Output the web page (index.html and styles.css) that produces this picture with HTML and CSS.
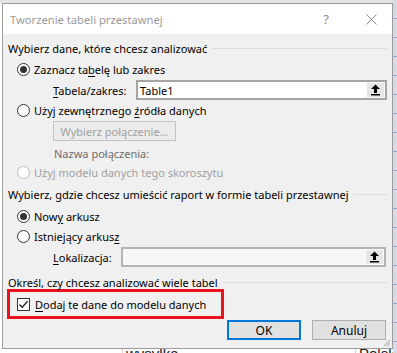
FILE: index.html
```html
<!DOCTYPE html>
<html lang="pl">
<head>
    <meta charset="UTF-8">
    <title>Tworzenie tabeli przestawnej</title>
    <link rel="stylesheet" href="styles.css">
</head>
<body>
    <div class="screen">
        <!-- Dialog window -->
        <div class="dialog">
            <div class="titlebar">
                <span class="title">Tworzenie tabeli przestawnej</span>
                <span class="help">?</span>
                <span class="close">
                    <svg width="11" height="11" viewBox="0 0 11 11"><path d="M0.5 0.5L10.5 10.5M10.5 0.5L0.5 10.5" stroke="#8a8a8a" stroke-width="1" fill="none"/></svg>
                </span>
            </div>

            <div class="content">
                <!-- Source data -->
                <div class="group-head"><span>Wybierz dane, które chcesz analizować</span></div>
                <div class="option"><span class="radio checked"></span><span>Zaznacz ta<u>b</u>elę lub zakres</span></div>
                <div class="field">
                    <span class="field-label label-table"><u>T</u>abela/zakres:</span>
                    <div class="ref-box">
                        <span class="ref-value">Table1</span>
                        <span class="ref-btn">
                            <svg width="11" height="12" viewBox="0 0 11 12"><path d="M5.5 0.5L10 5H7V9H4V5H1Z" fill="#000"/><rect x="1" y="10" width="9" height="1.5" fill="#000"/></svg>
                        </span>
                    </div>
                </div>
                <div class="option"><span class="radio"></span><span>Użyj zewnętrznego <u>ź</u>ródła danych</span></div>
                <div class="conn-row"><span class="conn-btn">Wybierz połączenie...</span></div>
                <div class="conn-name">Nazwa połączenia:</div>
                <div class="option option-small disabled"><span class="radio"></span><span>Użyj modelu danych tego skoroszytu</span></div>

                <!-- Destination -->
                <div class="group-head head-2"><span>Wybierz, gdzie chcesz umieścić raport w formie tabeli przestawnej</span></div>
                <div class="option option-new"><span class="radio checked"></span><span>Now<u>y</u> arkusz</span></div>
                <div class="option"><span class="radio"></span><span>Istniejący arkus<u>z</u></span></div>
                <div class="field">
                    <span class="field-label label-loc"><u>L</u>okalizacja:</span>
                    <div class="ref-box ref-disabled">
                        <span class="ref-value"></span>
                        <span class="ref-btn">
                            <svg width="11" height="12" viewBox="0 0 11 12"><path d="M5.5 0.5L10 5H7V9H4V5H1Z" fill="#000"/><rect x="1" y="10" width="9" height="1.5" fill="#000"/></svg>
                        </span>
                    </div>
                </div>

                <!-- Data model -->
                <div class="group-head head-3"><span>Określ, czy chcesz analizować wiele tabel</span></div>
                <div class="highlight">
                    <span class="checkbox">
                        <svg width="11" height="11" viewBox="0 0 11 11"><path d="M1.5 5.5L4.2 8.3L9.6 2.2" stroke="#222" stroke-width="1.3" fill="none"/></svg>
                    </span>
                    <span><u>D</u>odaj te dane do modelu danych</span>
                </div>

                <div class="actions">
                    <span class="btn btn-default">OK</span>
                    <span class="btn">Anuluj</span>
                </div>
            </div>

            <span class="grip">
                <svg width="8" height="8" viewBox="0 0 8 8"><path d="M7 1L1 7M7 4L4 7M7 7L7 7" stroke="#b8b8b8" stroke-width="1.2" fill="none"/></svg>
            </span>
        </div>

        <!-- Worksheet peeking under the dialog -->
        <div class="sheet-row">
            <span class="cell cell-a">wysyłka</span>
            <span class="cell cell-b">Polska</span>
        </div>
    </div>
</body>
</html>
```

FILE: styles.css
```css
* {
    box-sizing: border-box;
    margin: 0;
    padding: 0;
}

body {
    font-family: "Noto Sans", sans-serif;
    font-size: 11px;
    color: #000;
    background: #fff;
}

u {
    text-decoration-thickness: 1px;
    text-underline-offset: 2px;
}

/* Whole screenshot area with the sheet behind the dialog */
.screen {
    width: 397px;
    height: 353px;
    overflow: hidden;
    padding: 3px 4px 0 2px;
    background:
        repeating-linear-gradient(to bottom, #d3dae6 0 18px, #8fa6cc 18px 19px) right top / 4px 100% no-repeat,
        linear-gradient(#e4e4e4, #e4e4e4) left top / 100% 3px no-repeat,
        #fff;
}

/* Dialog window */
.dialog {
    position: relative;
    width: 391px;
    height: 346px;
    border: 1px solid #9c9c9c;
    background: #f0f0f0;
}

.titlebar {
    display: flex;
    align-items: center;
    height: 30px;
    padding-left: 7px;
    background: #fff;
}

.title {
    color: #999;
    font-size: 11.2px;
}

.help {
    margin-left: auto;
    color: #8a8a8a;
    font-size: 13px;
}

.close {
    display: flex;
    margin: 0 15px 0 37px;
}

.content {
    padding: 0 5px;
}

/* Section headings with the thin rule after them */
.group-head {
    display: flex;
    align-items: center;
    gap: 5px;
    height: 16px;
    margin-top: 6px;
    white-space: nowrap;
}

.group-head::after {
    content: "";
    flex: 1;
    height: 1px;
    background: #dcdcdc;
}

.head-2 {
    margin-top: 5px;
}

.head-3 {
    height: 14px;
    margin-top: 8px;
}

/* Radio rows */
.option {
    display: flex;
    align-items: center;
    gap: 4px;
    height: 20px;
    padding-left: 9px;
    white-space: nowrap;
}

.group-head + .option {
    margin-top: 3px;
}

.option-new {
    margin-top: 4px !important;
}

.option-small {
    height: 18px;
}

.radio {
    position: relative;
    flex: none;
    width: 13px;
    height: 13px;
    border: 1px solid #333;
    border-radius: 50%;
    background: #fff;
}

.radio.checked::after {
    content: "";
    position: absolute;
    left: 2px;
    top: 2px;
    width: 7px;
    height: 7px;
    border-radius: 50%;
    background: #333;
}

.disabled {
    color: #a0a0a0;
}

.disabled .radio {
    border-color: #bcbcbc;
}

/* Label + reference box */
.field {
    display: flex;
    align-items: center;
    height: 20px;
    padding-left: 45px;
}

.option + .field {
    margin-top: 1px;
}

.label-table {
    width: 83px;
}

.label-loc {
    width: 68px;
}

.ref-box {
    flex: 1;
    display: flex;
    align-items: center;
    height: 20px;
    border: 2px solid #a5a5a5;
    background: #fff;
}

.label-loc + .ref-box {
    margin-right: 1px;
}

.ref-disabled {
    background: #f7f7f7;
    border-color: #b4b4b4;
}

.ref-value {
    flex: 1;
    padding-left: 2px;
}

.ref-btn {
    display: flex;
    align-items: center;
    justify-content: center;
    width: 19px;
    height: 16px;
    background: #e6e6e6;
    border: 1px solid #fafafa;
}

/* External connection (disabled) */
.conn-row {
    margin-top: 1px;
    padding-left: 45px;
}

.conn-btn {
    display: flex;
    align-items: center;
    justify-content: center;
    width: 123px;
    height: 20px;
    border: 1px solid #c4c4c4;
    background: #ececec;
    color: #a0a0a0;
}

.conn-name {
    height: 18px;
    line-height: 18px;
    margin-top: 4px;
    padding-left: 46px;
    color: #6d6d6d;
}

/* Red annotation around the data model checkbox */
.highlight {
    display: flex;
    align-items: center;
    gap: 5px;
    width: 217px;
    height: 30px;
    margin-left: -1px;
    padding-left: 7px;
    border: 3px solid #e8141c;
    white-space: nowrap;
}

.checkbox {
    display: flex;
    align-items: center;
    justify-content: center;
    width: 13px;
    height: 13px;
    border: 1px solid #333;
    background: #fff;
}

/* Dialog buttons */
.actions {
    display: flex;
    justify-content: flex-end;
    gap: 11px;
    margin-top: 1px;
    padding-right: 1px;
}

.btn {
    display: flex;
    align-items: center;
    justify-content: center;
    width: 74px;
    height: 20px;
    border: 1px solid #adadad;
    background: #e1e1e1;
    font-size: 12px;
}

.btn-default {
    border: 2px solid #0078d7;
}

.grip {
    position: absolute;
    right: 1px;
    bottom: 1px;
    display: flex;
}

/* Worksheet cells under the dialog */
.sheet-row {
    position: relative;
    height: 4px;
    overflow: hidden;
    font-family: "Liberation Sans", sans-serif;
    font-size: 15px;
    line-height: 18px;
    color: #222;
}

.cell {
    position: absolute;
    top: -4px;
    height: 30px;
    padding-left: 3px;
    border-left: 1px solid #d4d4d4;
}

.cell-a {
    left: 120px;
}

.cell-b {
    left: 353px;
}
```
